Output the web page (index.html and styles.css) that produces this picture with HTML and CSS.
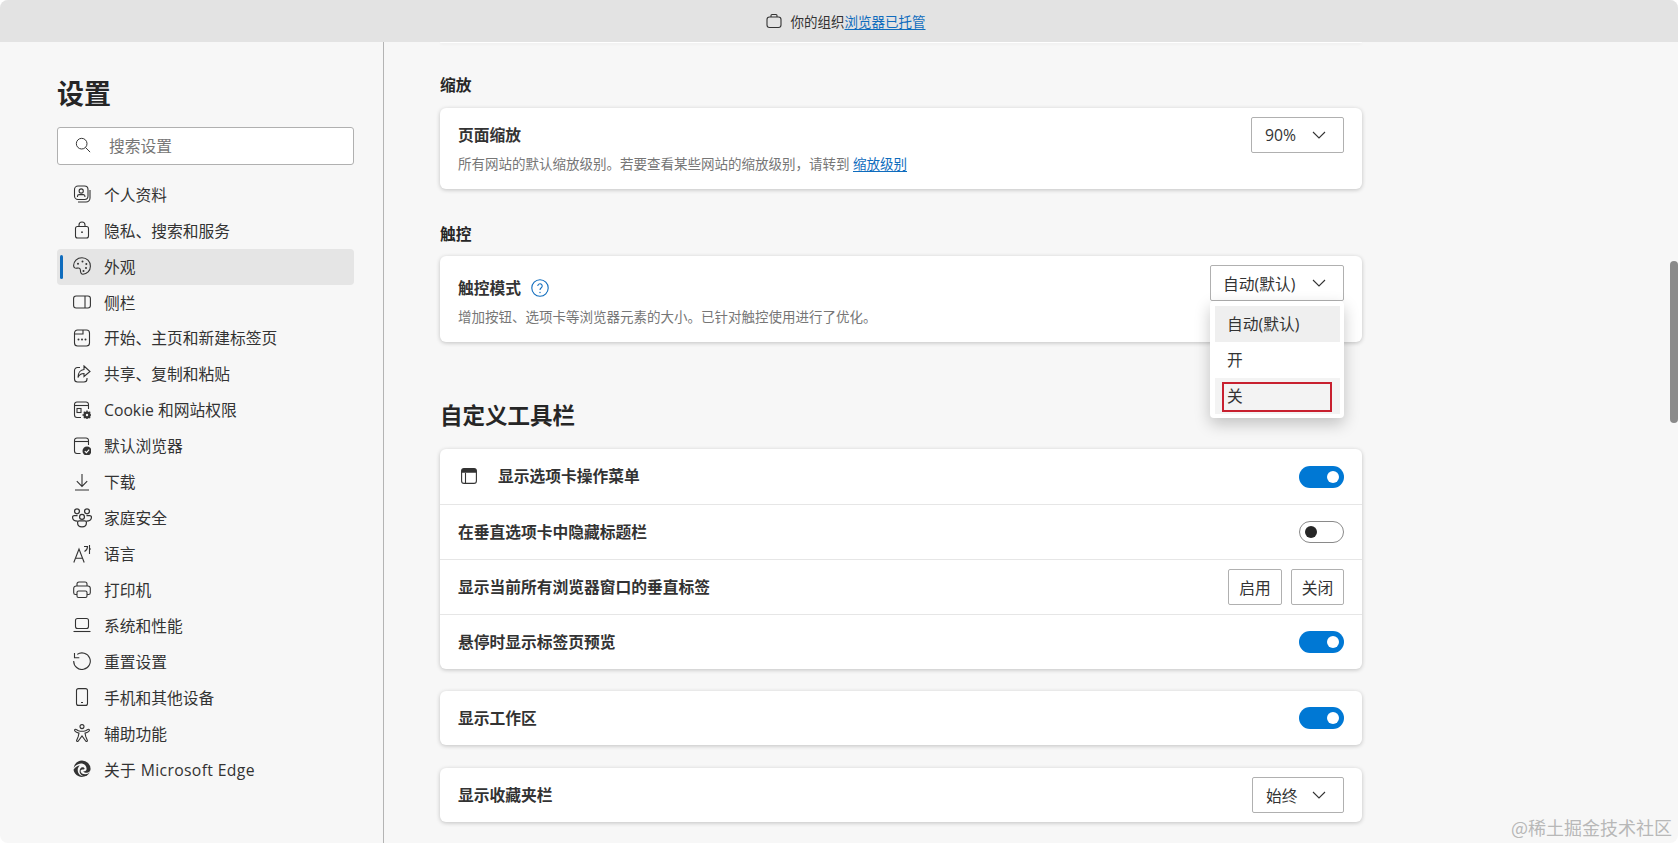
FILE: index.html
```html
<!DOCTYPE html>
<html lang="zh-CN">
<head>
    <meta charset="UTF-8">
    <title>设置</title>
    <link rel="stylesheet" href="styles.css">
</head>
<body>
<div class="window">
    <div class="banner">
        <svg class="banner-icon" viewBox="0 0 16 16"><rect x="1" y="4" width="14" height="10.5" rx="2.5"/><path d="M5 4V2.5A1 1 0 0 1 6 1.5h4a1 1 0 0 1 1 1V4"/></svg>
        <span>你的组织</span><a class="link" href="#">浏览器已托管</a>
    </div>
    <div class="content">
        <nav class="sidebar">
            <h1 class="sidebar-title">设置</h1>
            <div class="search">
                <svg class="icon search-icon" viewBox="0 0 18 18"><circle cx="7.5" cy="7.5" r="6"/><path d="M11.8 11.8L17 17"/></svg>
                <span>搜索设置</span>
            </div>
            <ul class="nav">
                <li class="nav-item">
                    <svg class="icon" viewBox="0 0 18 18"><rect x="1.5" y="1" width="13.5" height="13.5" rx="3.5"/><circle cx="8.2" cy="6" r="2.1"/><path d="M4.5 12v-.8a1.6 1.6 0 0 1 1.6-1.6h4.2a1.6 1.6 0 0 1 1.6 1.6v.8"/><path d="M17 5v8a4 4 0 0 1-4 4H5"/></svg>
                    个人资料
                </li>
                <li class="nav-item">
                    <svg class="icon" viewBox="0 0 18 18"><rect x="2.5" y="5.5" width="13" height="11.5" rx="2"/><path d="M6 5.5V4a3 3 0 0 1 6 0v1.5"/><circle class="solid" cx="9" cy="11.2" r=".9"/></svg>
                    隐私、搜索和服务
                </li>
                <li class="nav-item active">
                    <svg class="icon" viewBox="0 0 18 18"><path d="M9 .8C4 .8.6 4.4.6 8.6c0 2.3 1.8 2.9 3.4 2.5 1.7-.4 3.4.1 3.4 1.9 0 1 .1 4.2 2.6 4.2 3.9 0 7.4-3.5 7.4-8C17.4 4.4 13.8.8 9 .8z"/><circle class="solid" cx="5" cy="6.8" r="1"/><circle class="solid" cx="9.5" cy="4.5" r="1"/><circle class="solid" cx="13.3" cy="7" r="1"/><circle class="solid" cx="13" cy="11" r="1"/><circle class="solid" cx="10.5" cy="14" r="1"/></svg>
                    外观
                </li>
                <li class="nav-item">
                    <svg class="icon" viewBox="0 0 18 18"><rect x=".6" y="3" width="16.8" height="12" rx="2.5"/><path d="M12 3v12"/></svg>
                    侧栏
                </li>
                <li class="nav-item">
                    <svg class="icon" viewBox="0 0 18 18"><path d="M4.5 1H13.5A3 3 0 0 1 16.5 4V14A3 3 0 0 1 13.5 17H4.5A3 3 0 0 1 1.5 14V4A3 3 0 0 1 4.5 1Z"/><path d="M1.5 5H10V1"/><circle class="solid" cx="5.5" cy="10.5" r="1"/><circle class="solid" cx="9" cy="10.5" r="1"/><circle class="solid" cx="12.5" cy="10.5" r="1"/></svg>
                    开始、主页和新建标签页
                </li>
                <li class="nav-item">
                    <svg class="icon" viewBox="0 0 18 18"><path d="M7 2.5H4.500a3 3 0 0 0-3 3V14a3 3 0 0 0 3 3H11a3 3 0 0 0 3-3v-1"/><path d="M11 1l6 5.500-6 5V8.500C8 8.500 6 10 5 12.500 5 8 7.500 4.800 11 4.500z"/></svg>
                    共享、复制和粘贴
                </li>
                <li class="nav-item">
                    <svg class="icon" viewBox="0 0 18 18"><path d="M8 16.5H4A2.5 2.5 0 0 1 1.5 14V3.500A2.5 2.5 0 0 1 4 1h9a2.5 2.5 0 0 1 2.5 2.5V8"/><path d="M1.5 4.5h14"/><rect x="4" y="7.5" width="4" height="4"/><circle class="solid" cx="14" cy="14" r="3.6"/><circle class="hole" cx="14" cy="14" r="1.2"/><path class="gear" d="M14 9.5v9M9.500 14h9M10.800 10.800l6.400 6.400M17.200 10.800l-6.400 6.400"/></svg>
                    Cookie 和网站权限
                </li>
                <li class="nav-item">
                    <svg class="icon" viewBox="0 0 18 18"><path d="M7.5 16.5H4A2.5 2.5 0 0 1 1.5 14V3.500A2.5 2.5 0 0 1 4 1h9a2.5 2.5 0 0 1 2.5 2.5V8"/><path d="M1.5 4.5h14"/><circle class="solid" cx="14" cy="14" r="4.5"/><path class="check" d="M11.800 14.200l1.600 1.500 2.800-3"/></svg>
                    默认浏览器
                </li>
                <li class="nav-item">
                    <svg class="icon" viewBox="0 0 18 18"><path d="M9 1v12M3.800 8.200L9 13.400l5.200-5.200M2 17h14"/></svg>
                    下载
                </li>
                <li class="nav-item">
                    <svg class="icon icon-lg" viewBox="0 0 18 18"><circle cx="4.5" cy="3" r="2.2"/><circle cx="13.5" cy="3" r="2.2"/><circle cx="9" cy="8" r="2.2"/><path d="M5 6.800H2a1.500 1.500 0 0 0-1.500 1.500c0 2 1.200 3.500 4.500 3.500M13 6.800h3a1.500 1.500 0 0 1 1.500 1.500c0 2-1.200 3.500-4.500 3.500"/><path d="M5 13a1.500 1.500 0 0 1 1.500-1.500h5A1.500 1.500 0 0 1 13 13c0 2.500-1.800 4-4 4s-4-1.500-4-4z"/></svg>
                    家庭安全
                </li>
                <li class="nav-item">
                    <svg class="icon" viewBox="0 0 18 18"><path d="M.8 17.500L6 4l5.200 13.500M2.500 13.200h7M11 1.500h3.500c0 2.500-1.200 4-3 5M16.500 0v9M16.500 4H18"/></svg>
                    语言
                </li>
                <li class="nav-item">
                    <svg class="icon" viewBox="0 0 18 18"><path d="M4 5V3a2 2 0 0 1 2-2h6a2 2 0 0 1 2 2v2"/><path d="M4 13.500H2.500A1.800 1.800 0 0 1 .7 11.700V7.500A2.500 2.500 0 0 1 3.200 5h11.600a2.500 2.500 0 0 1 2.500 2.500v4.200a1.800 1.800 0 0 1-1.800 1.800H14"/><rect x="4" y="10" width="10" height="6.5" rx="1.5"/></svg>
                    打印机
                </li>
                <li class="nav-item">
                    <svg class="icon" viewBox="0 0 18 18"><rect x="2.5" y="2.5" width="13" height="10" rx="2"/><path d="M.5 15.500h17"/></svg>
                    系统和性能
                </li>
                <li class="nav-item">
                    <svg class="icon" viewBox="0 0 18 18"><path d="M4.200 2.400A8.300 8.300 0 1 1 .7 9"/><path d="M1.500 1v4.800h4.800"/></svg>
                    重置设置
                </li>
                <li class="nav-item">
                    <svg class="icon" viewBox="0 0 18 18"><rect x="3.5" y=".6" width="11" height="16.8" rx="2"/><path d="M8 14.500h2"/></svg>
                    手机和其他设备
                </li>
                <li class="nav-item">
                    <svg class="icon" viewBox="0 0 18 18"><circle cx="9" cy="2.6" r="2"/><path d="M2 5.500c-1 1 .2 2.200 1.500 2.700l2.500 1-.8 3.500-1.500 3.500c-.5 1.300 1.200 1.800 1.800.6L9 12l3.500 4.800c.6 1.200 2.300.7 1.800-.6l-1.500-3.500-.8-3.500 2.500-1C15.800 7.700 17 6.500 16 5.500c-.8-.7-2 .6-3.500 1.200-2.300.8-4.700.8-7 0C4 6.100 2.800 4.800 2 5.500z"/></svg>
                    辅助功能
                </li>
                <li class="nav-item about">
                    <svg class="icon" viewBox="0 0 18 18"><path class="solid" d="M9 .4A8.600 8.600 0 0 1 17.600 9c0 2.400-1.800 3.800-4 3.800-1.500 0-2.800-.5-3.300-1.500 2 .1 3.300-.8 3.300-2.400C13.600 5.500 11 3.400 8 3.400c-3.300 0-6 2.300-7.300 4.500C1.300 3.700 4.800.4 9 .4z"/><path class="solid" d="M.5 9.800C2 7.200 4.500 5.500 7 5.500c-1.400 1-2.300 2.600-2.300 4.400 0 3.300 2.600 6.300 6.300 6.300.8 0 1.500-.1 2.100-.3A8.600 8.600 0 0 1 .5 9.800z"/><path class="solid" d="M9.500 7.200c1.300 0 2.100.7 2.100 1.500 0 .6-.8.700-1.700.7-1.300 0-2.300.5-2.300 1.500 0 2 2 3.300 4.600 3.300 2 0 3.500-.7 4.600-1.900a8.600 8.600 0 0 1-3.400 3.600c-.7.100-1.200.2-1.800.2-3 0-5-2.300-5-4.800 0-2.200 1.200-4.100 2.900-4.100z"/></svg>
                    关于 Microsoft Edge
                </li>
            </ul>
        </nav>
        <main class="main">
            <div class="card card-cut"></div>

            <h2 class="group-title first">缩放</h2>
            <section class="card setting zoom">
                <div>
                    <div class="setting-name">页面缩放</div>
                    <div class="setting-desc">所有网站的默认缩放级别。若要查看某些网站的缩放级别，请转到 <a class="link" href="#">缩放级别</a></div>
                </div>
                <div class="select select-zoom"><span>90%</span><svg class="chevron" viewBox="0 0 14 8"><path d="M1 1l6 6 6-6"/></svg></div>
            </section>

            <h2 class="group-title">触控</h2>
            <section class="card setting touch">
                <div>
                    <div class="setting-name with-help">触控模式
                        <svg class="help" viewBox="0 0 18 18"><circle cx="9" cy="9" r="8.2"/><path d="M6.800 7a2.200 2.200 0 1 1 3.500 1.800c-.8.600-1.300 1-1.300 2.200"/><circle class="dot" cx="9" cy="13.5" r=".7"/></svg>
                    </div>
                    <div class="setting-desc">增加按钮、选项卡等浏览器元素的大小。已针对触控使用进行了优化。</div>
                </div>
                <div class="select-wrap">
                    <div class="select select-touch"><span>自动(默认)</span><svg class="chevron" viewBox="0 0 14 8"><path d="M1 1l6 6 6-6"/></svg></div>
                    <ul class="dropdown">
                        <li class="option selected">自动(默认)</li>
                        <li class="option">开</li>
                        <li class="option hover">关<span class="red-box"></span></li>
                    </ul>
                </div>
            </section>

            <h2 class="page-title">自定义工具栏</h2>
            <section class="card rows">
                <div class="row">
                    <div class="row-label">
                        <svg class="tab-icon" viewBox="0 0 16 16"><rect x=".6" y=".6" width="14.8" height="14.8" rx="2.5"/><path class="tab-top" d="M.6 3.100A2.500 2.500 0 0 1 3.100.6h9.800a2.500 2.500 0 0 1 2.500 2.500v1.700H.6z"/><path d="M4.500 4.800v10.600"/></svg>
                        显示选项卡操作菜单
                    </div>
                    <span class="toggle on"></span>
                </div>
                <div class="row">
                    <div class="row-label">在垂直选项卡中隐藏标题栏</div>
                    <span class="toggle"></span>
                </div>
                <div class="row">
                    <div class="row-label">显示当前所有浏览器窗口的垂直标签</div>
                    <div class="buttons"><button class="btn btn-on">启用</button><button class="btn">关闭</button></div>
                </div>
                <div class="row">
                    <div class="row-label">悬停时显示标签页预览</div>
                    <span class="toggle on"></span>
                </div>
            </section>
            <section class="card rows single">
                <div class="row">
                    <div class="row-label">显示工作区</div>
                    <span class="toggle on"></span>
                </div>
            </section>
            <section class="card rows single last">
                <div class="row">
                    <div class="row-label">显示收藏夹栏</div>
                    <div class="select select-always"><span>始终</span><svg class="chevron" viewBox="0 0 14 8"><path d="M1 1l6 6 6-6"/></svg></div>
                </div>
            </section>
        </main>
        <div class="scrollbar"><div class="scroll-thumb"></div></div>
    </div>
    <div class="watermark">@稀土掘金技术社区</div>
</div>
</body>
</html>
```

FILE: styles.css
```css
* {
    box-sizing: border-box;
}
html, body {
    margin: 0;
    height: 100%;
    background-color: #fff;
    overflow: hidden;
}
body {
    font-family: "Open Sans", "Noto Sans CJK SC", sans-serif;
    font-size: 15.75px;
    color: #333;
}
h1, h2, ul {
    margin: 0;
    padding: 0;
}
ul {
    list-style: none;
}
.window {
    position: relative;
    height: 843px;
    display: flex;
    flex-direction: column;
    background-color: #f7f7f7;
    border-radius: 8px;
    overflow: hidden;
}
.banner {
    flex: none;
    height: 42px;
    padding-left: 13px;
    display: flex;
    align-items: center;
    justify-content: center;
    background-color: #e3e3e3;
    font-size: 13.5px;
    position: relative;
    z-index: 2;
}
.banner-icon {
    width: 16px;
    height: 16px;
    margin-right: 9px;
    fill: none;
    stroke: #333;
    stroke-width: 1.1;
}
.link {
    color: #0f6cbd;
    text-decoration: underline;
    text-underline-offset: 2px;
}
.content {
    flex: 1;
    min-height: 0;
    display: flex;
}

/* sidebar */
.sidebar {
    flex: none;
    width: 384px;
    padding: 34px 29.5px 0 57px;
    border-right: 1px solid #b4b4b4;
}
.sidebar-title {
    font-size: 27px;
    line-height: 36px;
    font-weight: 700;
    color: #262626;
    margin-bottom: 15px;
}
.search {
    height: 38px;
    display: flex;
    align-items: center;
    gap: 18px;
    padding: 0 0 1.5px 17px;
    background-color: #fff;
    border: 1px solid #b0b0b0;
    border-radius: 3px;
    color: #767676;
}
.icon {
    flex: none;
    width: 18px;
    height: 18px;
    fill: none;
    stroke: #333;
    stroke-width: 1.1;
}
.search-icon {
    width: 16px;
    height: 16px;
}
.icon-lg {
    width: 20px;
    height: 20px;
    margin: 0 -1px;
}
.icon .solid {
    fill: #333;
    stroke: none;
}
.icon .hole {
    fill: #f7f7f7;
    stroke: none;
}
.icon .gear {
    stroke: #333;
    stroke-width: 1.3;
    stroke-dasharray: 1.4 6.2;
}
.icon .check {
    stroke: #fff;
}
.nav {
    margin-top: 12px;
}
.nav-item {
    position: relative;
    height: 35.94px;
    display: flex;
    align-items: center;
    gap: 13px;
    padding: 0 0 1.5px 16px;
    border-radius: 4px;
}
.nav-item.active {
    background-color: #e5e5e5;
}
.nav-item.active::before {
    content: "";
    position: absolute;
    left: 3px;
    top: 6px;
    bottom: 6px;
    width: 3px;
    border-radius: 2px;
    background-color: #0f6cbd;
}
.nav-item.about {
    letter-spacing: 0.35px;
}

/* main column */
.main {
    flex: 1;
    min-width: 0;
    padding-left: 56px;
    padding-right: 308px;
}
.card {
    background-color: #fff;
    border-radius: 6px;
    box-shadow: 0 1px 4px rgba(0, 0, 0, 0.22);
}
.card-cut {
    height: 1px;
    border-radius: 0 0 6px 6px;
    box-shadow: 0 1px 3px rgba(0, 0, 0, 0.08);
}
.group-title {
    font-size: 15.75px;
    line-height: 22px;
    font-weight: 600;
    margin: 34px 0 11px;
    color: #262626;
}
.group-title.first {
    margin-top: 31px;
    margin-bottom: 12px;
}
.page-title {
    font-size: 22.5px;
    line-height: 30px;
    font-weight: 600;
    margin: 59px 0 18px;
    color: #262626;
}
.setting {
    display: flex;
    justify-content: space-between;
    align-items: flex-start;
    padding: 9px 18px 16px;
}
.setting-name {
    font-weight: 600;
    line-height: 22px;
    margin: 7px 0 9px;
}
.touch .setting-name {
    margin: 12px 0 9px;
}
.with-help {
    display: flex;
    align-items: center;
    gap: 10px;
}
.help {
    width: 18px;
    height: 18px;
    fill: none;
    stroke: #0f6cbd;
    stroke-width: 1.1;
}
.help .dot {
    fill: #0f6cbd;
    stroke: none;
}
.setting-desc {
    font-size: 13.5px;
    line-height: 18px;
    color: #767676;
}
.select {
    height: 36px;
    display: flex;
    align-items: center;
    justify-content: space-between;
    padding: 0 17px 0 13px;
    background-color: #fff;
    border: 1px solid #b0b0b0;
    border-radius: 2px;
}
.select-zoom {
    width: 93px;
}
.select-touch {
    width: 134px;
    padding-left: 12px;
}
.select-always {
    width: 92px;
}
.chevron {
    flex: none;
    width: 14px;
    height: 8px;
    fill: none;
    stroke: #333;
    stroke-width: 1.1;
}
.select-wrap {
    position: relative;
}
.dropdown {
    position: absolute;
    top: 36px;
    left: 0;
    width: 134px;
    padding: 5px 4px 4px 5px;
    background-color: #fff;
    border-radius: 4px;
    box-shadow: 0 6px 16px rgba(0, 0, 0, 0.22);
    z-index: 3;
}
.option {
    position: relative;
    height: 36px;
    line-height: 36px;
    padding-left: 12px;
}
.option.selected {
    background-color: #efefef;
}
.option.hover {
    background-color: #f3f3f3;
}
.red-box {
    position: absolute;
    left: 7px;
    right: 8px;
    top: 4px;
    bottom: 2px;
    border: 2px solid #c8202f;
}
.rows .row {
    height: 55px;
    display: flex;
    align-items: center;
    justify-content: space-between;
    padding: 0 18px;
    border-top: 1px solid #e6e6e6;
}
.rows .row:first-child {
    border-top: none;
}
.rows.single {
    margin-top: 22px;
}
.rows.last {
    margin-top: 23px;
}
.rows.single .row {
    height: 54px;
}
.row-label {
    display: flex;
    align-items: center;
    font-weight: 600;
    padding-bottom: 1.5px;
}
.tab-icon {
    width: 16px;
    height: 16px;
    margin: 0 21px 0 3px;
    fill: none;
    stroke: #333;
    stroke-width: 1.1;
}
.tab-icon .tab-top {
    fill: #333;
    stroke: none;
}
.toggle {
    position: relative;
    width: 45px;
    height: 22px;
    border: 1px solid #8a8a8a;
    border-radius: 11px;
    background-color: #fff;
}
.toggle::after {
    content: "";
    position: absolute;
    left: 5px;
    top: 4px;
    width: 12px;
    height: 12px;
    border-radius: 50%;
    background-color: #262626;
}
.toggle.on {
    border: none;
    background-color: #0078d4;
}
.toggle.on::after {
    left: 28px;
    top: 5px;
    background-color: #fff;
}
.buttons {
    display: flex;
    gap: 9px;
}
.btn {
    width: 53px;
    height: 36px;
    padding: 0;
    font: inherit;
    color: #333;
    background-color: #fff;
    border: 1px solid #b0b0b0;
    border-radius: 2px;
}
.btn-on {
    width: 54px;
}
.scrollbar {
    flex: none;
    width: 8px;
    padding-top: 219px;
}
.scroll-thumb {
    height: 162px;
    background-color: #8a8a8a;
    border-radius: 4px;
}
.watermark {
    position: absolute;
    right: 6px;
    bottom: 4px;
    font-size: 18px;
    line-height: 24px;
    color: #b8b8b8;
    font-family: "Noto Sans CJK SC", sans-serif;
}
```
